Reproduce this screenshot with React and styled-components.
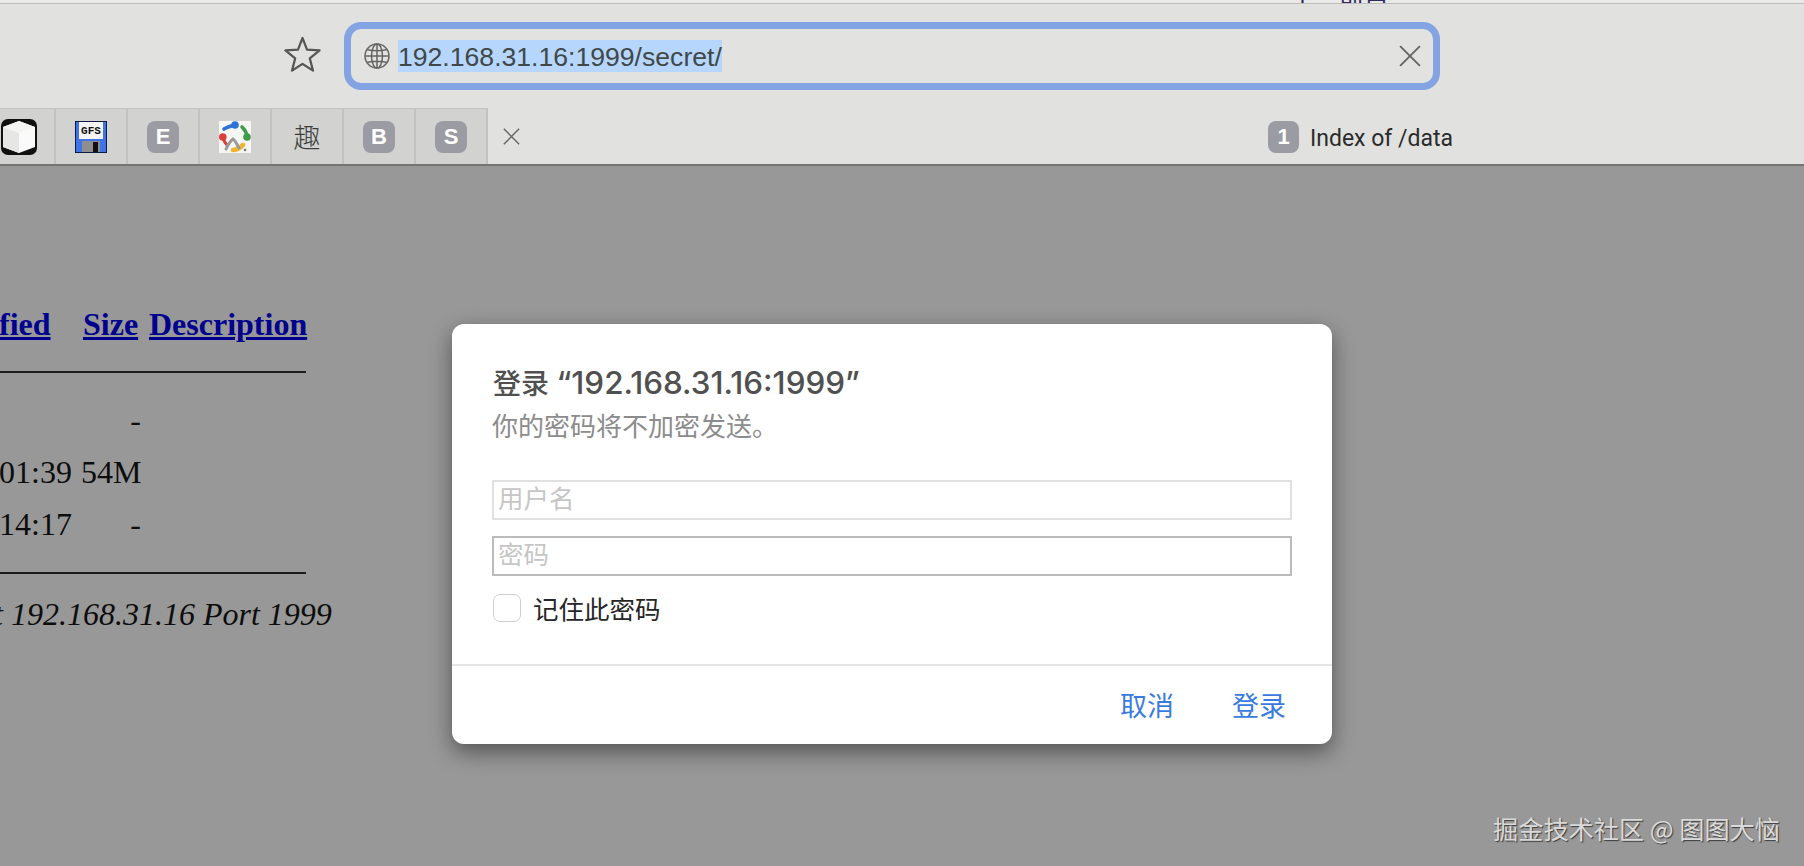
import styled, { createGlobalStyle } from "styled-components";

const CJK = `"Noto Sans CJK SC", sans-serif`;

const Global = createGlobalStyle`
  html, body { margin: 0; padding: 0; background: #989898; }
  * { box-sizing: border-box; }
`;

const Page = styled.div`
  position: relative;
  width: 1804px;
  height: 866px;
  overflow: hidden;
  display: flex;
  flex-direction: column;
  background: #989898;
`;

const Chrome = styled.header`
  flex: none;
  height: 166px;
  display: flex;
  flex-direction: column;
  background: #e1e2e0;
  border-bottom: 2px solid #747474;
`;

const TopStrip = styled.div`
  flex: none;
  height: 4px;
  overflow: hidden;
  display: flex;
  align-items: flex-end;
  padding-left: 1290px;
  gap: 24px;
  background: #e9e9e7;
  border-bottom: 1px solid #bdbdbb;
  font: 25px/30px ${CJK};
  color: #2f2a5c;
`;

const Clipped = styled.span`
  flex: none;
  margin-bottom: -8px;
`;

const Toolbar = styled.div`
  flex: none;
  height: 104px;
  padding: 18px 0 0 284px;
  display: flex;
  align-items: flex-start;
  gap: 23px;
`;

const StarSlot = styled.span`
  flex: none;
  display: flex;
  margin-top: 14px;
`;

const AddressBar = styled.div`
  flex: none;
  width: 1096px;
  height: 68px;
  padding: 0 12px 0 13px;
  display: flex;
  align-items: center;
  gap: 8px;
  border: 7px solid #84a3e3;
  border-radius: 17px;
  background: #e2e3e1;
`;

const Url = styled.span`
  height: 32px;
  font: 26.6px/35px "Liberation Sans", sans-serif;
  color: #404848;
  background: #b6d6fd;
`;

const ClearSlot = styled.span`
  display: flex;
  margin-left: auto;
`;

const TabStrip = styled.div`
  flex: none;
  height: 56px;
  display: flex;
  align-items: stretch;
`;

const Tabs = styled.div`
  display: flex;
  margin-left: -16px;
  border-top: 1px solid #c3c4c2;
`;

const Tab = styled.div`
  width: 72px;
  padding-top: 1px;
  display: flex;
  align-items: center;
  justify-content: center;
  background: #d2d3d1;
  border-right: 2px solid #c2c3c1;
`;

const Badge = styled.span`
  flex: none;
  width: ${(p) => p.$w || 32}px;
  height: 32px;
  display: flex;
  align-items: center;
  justify-content: center;
  border-radius: 8px;
  background: #9b9ca3;
  color: #fff;
  font: 700 22px/32px "Liberation Sans", sans-serif;
`;

const KanjiIcon = styled.span`
  font: 300 27px/32px ${CJK};
  color: #3d3d3d;
`;

const CloseSlot = styled.span`
  align-self: center;
  display: flex;
  margin: 1px 0 0 15px;
`;

const ActiveTab = styled.div`
  margin-left: 748px;
  padding-top: 2px;
  display: flex;
  align-items: center;
  gap: 11px;
`;

const ActiveTitle = styled.span`
  padding-top: 3px;
  font: 23px/32px Roboto, sans-serif;
  color: #2b2b2b;
`;

const Main = styled.main`
  flex: 1;
  padding-top: 132px;
  font: 32px/52px "Liberation Serif", serif;
  color: #0d0d0d;
`;

const Listing = styled.table`
  width: 306px;
  table-layout: fixed;
  border-collapse: collapse;
`;

const Head = styled.th`
  padding: 0 0 0 ${(p) => p.$pl || 0}px;
  font-weight: 700;
  text-align: left;
  text-indent: ${(p) => p.$indent || 0}px;
`;

const HeadLink = styled.a`
  color: #00008f;
  text-decoration: underline;
`;

const Cell = styled.td`
  padding: 0 ${(p) => p.$pr || 0}px 0 0;
  text-align: ${(p) => p.$align || "left"};
  text-indent: ${(p) => p.$indent || 0}px;
`;

const RuleCell = styled.td`
  padding: 0;
  height: ${(p) => p.$h}px;
  vertical-align: middle;
`;

const Rule = styled.div`
  height: 2px;
  background: #1c1c1c;
`;

const Address = styled.address`
  margin: 1px 0 0 -6px;
  font: italic 32px/36px "Liberation Serif", serif;
  color: #0d0d0d;
  white-space: nowrap;
`;

const Dialog = styled.section`
  position: absolute;
  left: 452px;
  top: 324px;
  width: 880px;
  height: 420px;
  display: flex;
  flex-direction: column;
  background: #fff;
  border-radius: 12px;
  box-shadow: 0 8px 22px rgba(0, 0, 0, 0.45);
`;

const DialogBody = styled.div`
  flex: 1;
  padding: 40px 40px 0;
  display: flex;
  flex-direction: column;
  border-bottom: 2px solid #e6e6e6;
`;

const Title = styled.h2`
  margin: 0 0 0 1px;
  font: 500 28px/38px Inter, ${CJK};
  color: #505050;
`;

const TitleHost = styled.span`
  font-size: 31.4px;
`;

const Subtitle = styled.p`
  margin: 4px 0 37px 0;
  font: 26px/36px ${CJK};
  color: #8c8c8c;
`;

const Field = styled.input`
  width: 800px;
  height: 40px;
  margin-bottom: 16px;
  padding: 0 4px 8px;
  border: 2px solid ${(p) => (p.$strong ? "#bcbcbc" : "#e0e0e0")};
  border-radius: 0;
  outline: none;
  background: #fff;
  font: 25.5px ${CJK};
  &::placeholder { color: #c6c6c6; opacity: 1; }
`;

const RememberRow = styled.label`
  margin: 2px 0 0 1px;
  display: flex;
  align-items: center;
  gap: 12px;
  font: 25.5px/28px ${CJK};
  color: #262626;
`;

const CheckBox = styled.span`
  flex: none;
  width: 28px;
  height: 28px;
  background: #fff;
  border: 1px solid #cfcfcf;
  border-radius: 7px;
`;

const DialogFooter = styled.div`
  flex: none;
  height: 78px;
  padding: 0 46px 0 0;
  display: flex;
  align-items: center;
  justify-content: flex-end;
  gap: 58px;
`;

const ActionLink = styled.button`
  padding: 0;
  border: 0;
  background: none;
  font: 27px/36px ${CJK};
  color: #3a7be0;
`;

const Watermark = styled.div`
  position: absolute;
  right: 24px;
  bottom: 20px;
  font: 25.2px/36px ${CJK};
  color: #dadada;
  white-space: nowrap;
  text-shadow: 1px 1px 1px #3d3d3d;
`;

const StarIcon = () => (
  <svg width="37" height="36" viewBox="0 0 37 36" fill="none" stroke="#555" strokeWidth="2.2" strokeLinejoin="round">
    <path d="M18.5 2 23 13.6l12.6.8-9.8 8 3.2 12.2-10.5-6.8L8 34.6l3.2-12.2-9.8-8 12.6-.8z" />
  </svg>
);

const Cross = ({ size, color }) => (
  <svg width={size} height={size} viewBox="0 0 20 20" stroke={color} strokeWidth="1.7" fill="none">
    <path d="M1 1l18 18M19 1L1 19" />
  </svg>
);

const GlobeIcon = () => (
  <svg width="26" height="26" viewBox="0 0 26 26" fill="none" stroke="#666" strokeWidth="1.5">
    <circle cx="13" cy="13" r="12" />
    <ellipse cx="13" cy="13" rx="5.5" ry="12" />
    <path d="M13 1v24M1 13h24M3 6.5c6 1.6 14 1.6 20 0M3 19.5c6-1.6 14-1.6 20 0" />
  </svg>
);

const CubeIcon = () => (
  <svg width="36" height="36" viewBox="0 0 36 36">
    <rect width="36" height="36" rx="7" fill="#111" />
    <path d="M18 2 34 8v20L18 34 2 28V8z" fill="#fafafa" />
    <path d="M2 8l16 6v20L2 28z" fill="#e6e6e4" />
    <path d="M2 8l16-6 16 6-16 6z" fill="#f4f4f2" />
  </svg>
);

const FloppyIcon = () => (
  <svg width="32" height="32" viewBox="0 0 32 32">
    <rect x="0.5" y="0.5" width="31" height="31" fill="#3f73e6" stroke="#0c1a44" />
    <rect x="4" y="1" width="24" height="17" fill="#f4f4f4" />
    <text x="16" y="13" textAnchor="middle" fontFamily="Liberation Mono, monospace" fontWeight="700" fontSize="11" fill="#111">GFS</text>
    <rect x="7" y="20" width="18" height="11" fill="#8f8f8f" />
    <rect x="18" y="21" width="5" height="10" fill="#111" />
  </svg>
);

const RingLogo = () => (
  <svg width="32" height="32" viewBox="0 0 32 32" fill="none" strokeLinecap="round">
    <rect width="32" height="32" fill="#f6f6f4" />
    <path d="M5 8c3-2 7-3 11-4" stroke="#2f72d6" strokeWidth="3.6" />
    <circle cx="16" cy="4" r="3.8" fill="#2f72d6" />
    <path d="M23 6c3 3 5 6 5 10" stroke="#3f9c4b" strokeWidth="3.6" />
    <circle cx="28" cy="16" r="3.8" fill="#3f9c4b" />
    <circle cx="3.8" cy="16" r="3.8" fill="#d9423a" />
    <path d="M4 17c1 3 2 5 4 7" stroke="#d9423a" strokeWidth="3" />
    <path d="M14 29c4 0 7-2 10-5" stroke="#f0b431" strokeWidth="4.6" />
    <path d="M7 28c2-4 4-8 7-10 3 2 4 6 6 9" stroke="#9a9a9a" strokeWidth="3" />
    <circle cx="26" cy="29" r="1.3" fill="#777" />
  </svg>
);

const App = () => {
  return (
    <Page>
      <Global />
      <Chrome>
        <TopStrip>
          <Clipped>丨</Clipped>
          <Clipped>前目</Clipped>
        </TopStrip>
        <Toolbar>
          <StarSlot><StarIcon /></StarSlot>
          <AddressBar>
            <GlobeIcon />
            <Url>192.168.31.16:1999/secret/</Url>
            <ClearSlot><Cross size={22} color="#666" /></ClearSlot>
          </AddressBar>
        </Toolbar>
        <TabStrip>
          <Tabs>
            <Tab><CubeIcon /></Tab>
            <Tab><FloppyIcon /></Tab>
            <Tab><Badge>E</Badge></Tab>
            <Tab><RingLogo /></Tab>
            <Tab><KanjiIcon>趣</KanjiIcon></Tab>
            <Tab><Badge>B</Badge></Tab>
            <Tab><Badge>S</Badge></Tab>
          </Tabs>
          <CloseSlot><Cross size={17} color="#666" /></CloseSlot>
          <ActiveTab>
            <Badge $w={31}>1</Badge>
            <ActiveTitle>Index of /data</ActiveTitle>
          </ActiveTab>
        </TabStrip>
      </Chrome>

      <Main>
        <Listing>
          <colgroup>
            <col width="81" />
            <col width="68" />
            <col width="157" />
          </colgroup>
          <thead>
            <tr>
              <Head $indent={-1}><HeadLink>fied</HeadLink></Head>
              <Head $pl={2}><HeadLink>Size</HeadLink></Head>
              <Head><HeadLink>Description</HeadLink></Head>
            </tr>
          </thead>
          <tbody>
            <tr><RuleCell colSpan="3" $h={44}><Rule /></RuleCell></tr>
            <tr><Cell /><Cell $align="right" $pr={8}>-</Cell><Cell /></tr>
            <tr><Cell $indent={-1}>01:39</Cell><Cell $align="right" $pr={8}>54M</Cell><Cell /></tr>
            <tr><Cell $indent={-1}>14:17</Cell><Cell $align="right" $pr={8}>-</Cell><Cell /></tr>
            <tr><RuleCell colSpan="3" $h={45}><Rule /></RuleCell></tr>
          </tbody>
        </Listing>
        <Address>t 192.168.31.16 Port 1999</Address>
      </Main>

      <Dialog>
        <DialogBody>
          <Title>登录 <TitleHost>“192.168.31.16:1999”</TitleHost></Title>
          <Subtitle>你的密码将不加密发送。</Subtitle>
          <Field placeholder="用户名" readOnly />
          <Field placeholder="密码" $strong readOnly />
          <RememberRow>
            <CheckBox />
            记住此密码
          </RememberRow>
        </DialogBody>
        <DialogFooter>
          <ActionLink>取消</ActionLink>
          <ActionLink>登录</ActionLink>
        </DialogFooter>
      </Dialog>

      <Watermark>掘金技术社区 @ 图图大恼</Watermark>
    </Page>
  );
};

export default App;
